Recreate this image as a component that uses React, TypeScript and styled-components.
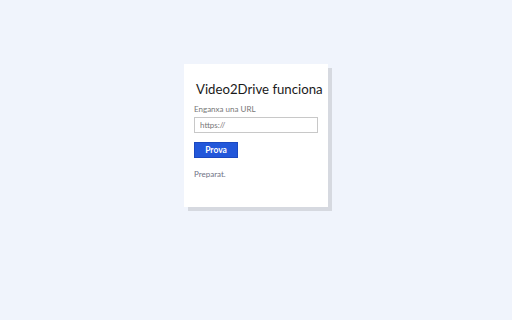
import React from "react";
import styled, { createGlobalStyle } from "styled-components";

const Global = createGlobalStyle`
  html, body { margin: 0; padding: 0; }
  body {
    background: #f0f4fc;
    font-family: "Lato", "Noto Sans", sans-serif;
    width: 512px;
    height: 320px;
    overflow: hidden;
  }
`;

const Page = styled.div`
  display: flex;
  justify-content: flex-start;
  padding: 64px 0 0 184px;
`;

const Card = styled.div`
  width: 144px;
  height: 143px;
  box-sizing: border-box;
  background: #ffffff;
  box-shadow: 4px 4px 0 #d6d9e0;
  padding: 15px 10px 10px 10px;
  display: flex;
  flex-direction: column;
`;

const Title = styled.h1`
  margin: 0 0 0 2px;
  font-size: 13.2px;
  font-weight: 400;
  color: #1a1a1a;
  line-height: 20px;
  white-space: nowrap;
`;

const Label = styled.label`
  margin-top: 5px;
  font-size: 8px;
  color: #777;
  line-height: 11px;
`;

const Input = styled.input`
  margin-top: 2px;
  width: 124px;
  height: 16px;
  box-sizing: border-box;
  border: 1px solid #c8c8c8;
  padding: 0 5px;
  font-family: inherit;
  font-size: 8px;
  color: #666;
  outline: none;
  &::placeholder { color: #777; }
`;

const Button = styled.button`
  margin-top: 9px;
  width: 44px;
  height: 16px;
  background: #2257da;
  border: 1px solid #1b48c0;
  color: #fff;
  font-family: inherit;
  font-size: 8.5px;
  font-weight: 700;
  padding: 0;
  cursor: pointer;
`;

const Status = styled.div`
  margin-top: 11px;
  font-size: 8px;
  color: #6f7385;
  line-height: 11px;
`;

export default function App() {
  return (
    <>
      <Global />
      <Page>
        <Card>
          <Title>Video2Drive funciona</Title>
          <Label>Enganxa una URL</Label>
          <Input placeholder="https://" />
          <div><Button>Prova</Button></div>
          <Status>Preparat.</Status>
        </Card>
      </Page>
    </>
  );
}
